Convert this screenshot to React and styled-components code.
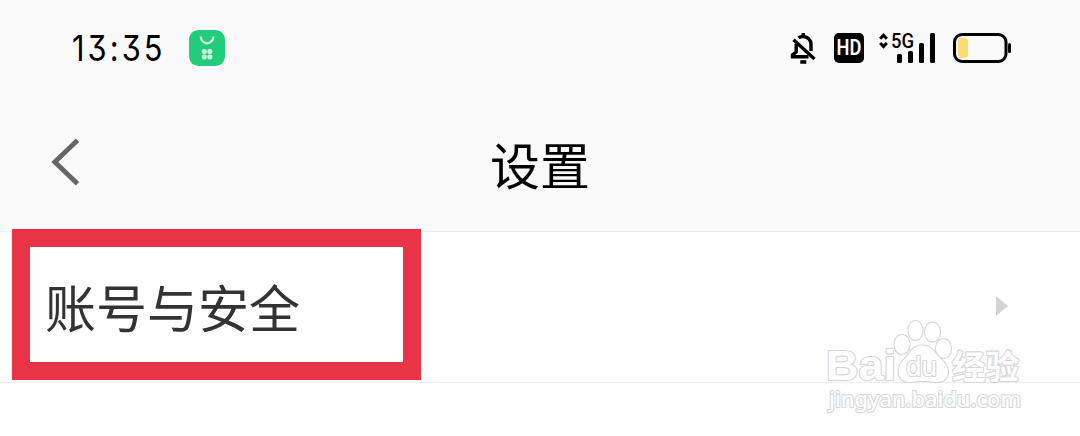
import styled, { createGlobalStyle } from 'styled-components';

const GlobalStyle = createGlobalStyle`
  body {
    margin: 0;
    background-color: #fff;
    font-family: "Noto Sans CJK SC", sans-serif;
  }
`;

const Screen = styled.div`
  position: relative;
  width: 1080px;
  height: 436px;
  overflow: hidden;
  background-color: #fefefe;
`;

const Header = styled.header`
  box-sizing: border-box;
  height: 232px;
  background-color: #f9f9f9;
  border-bottom: 1px solid #efefef;
`;

const StatusBar = styled.div`
  display: flex;
  justify-content: space-between;
  align-items: center;
  height: 96px;
  padding: 0 68px 0 72px;
`;

const StatusGroup = styled.div`
  display: flex;
  align-items: center;
`;

const TimeBox = styled.div`
  width: 117px;
`;

const Time = styled.span`
  display: inline-block;
  font-family: Inter, sans-serif;
  font-size: 36px;
  line-height: 44px;
  font-feature-settings: "cv09";
  letter-spacing: 3.6px;
  white-space: nowrap;
  color: #000;
  transform: scaleX(0.855);
  transform-origin: left center;
`;

const Icon = styled.svg`
  display: block;
  flex: none;
  overflow: visible;
  margin-left: ${(props) => props.$gap || 0}px;
`;

const HdBadge = styled.div`
  display: flex;
  justify-content: center;
  align-items: center;
  width: 30px;
  height: 30px;
  margin-left: 18px;
  border-radius: 5px;
  background-color: #000;
`;

const HdText = styled.span`
  color: #fff;
  font-family: Roboto, sans-serif;
  font-size: 22px;
  font-weight: 600;
  line-height: 30px;
  transform: scaleX(0.83);
`;

const TitleBar = styled.div`
  display: grid;
  grid-template-columns: 1fr auto 1fr;
  align-items: center;
  height: 132px;
  padding: 0 51px;
`;

const Title = styled.h1`
  margin: 2px 0 0;
  font-size: 50px;
  font-weight: 400;
  line-height: 74px;
  color: #000;
`;

const Row = styled.div`
  box-sizing: border-box;
  display: flex;
  justify-content: space-between;
  align-items: center;
  height: 151px;
  padding: 0 72px 2px 45px;
  border-bottom: 1px solid #efefef;
`;

const RowLabel = styled.span`
  font-size: 51px;
  font-weight: 400;
  line-height: 74px;
  color: #333;
`;

const Highlight = styled.div`
  position: absolute;
  box-sizing: border-box;
  left: 12px;
  top: 229px;
  width: 409px;
  height: 151px;
  border: 18px solid #e93448;
`;

const Watermark = styled.svg`
  position: absolute;
  left: 820px;
  top: 310px;
`;

const BellOff = () => (
  <Icon width="26" height="32" viewBox="0 0 26 32" fill="none" stroke="#000" strokeWidth="3.4">
    <path d="M8.5 5.9C9.8 4.9 11.4 4.5 13 4.5c4.6 0 8 3.3 8 7.8V19" />
    <path d="M6.2 12v8L2.5 22.8v1.9H18.5" />
    <path d="M3.5 7.800L24.500 27" />
    <path d="M13.3 1v4M10.3 30h6" />
  </Icon>
);

const AppBadge = () => (
  <Icon width="36" height="36" viewBox="0 0 36 36">
    <rect width="36" height="36" rx="9.5" fill="#23cc7b" />
    <path d="M11.8 6.500a6.3 6.8 0 0 0 12.6 0" fill="none" stroke="#c9f7df" strokeWidth="2.2" />
    <g fill="#c9f7df">
      <rect x="12.8" y="19" width="5" height="5" rx="2" />
      <rect x="18.4" y="19" width="5" height="5" rx="2" />
      <rect x="12.8" y="24.4" width="5" height="5" rx="2" />
      <rect x="18.4" y="24.4" width="5" height="5" rx="2" />
    </g>
  </Icon>
);

const Signal = () => (
  <Icon $gap={15} width="57" height="30" viewBox="0 0 57 30">
    <path d="M1.2 5.8l3.3-3.6 3.3 3.6M1.2 9.9l3.3 3.6 3.3-3.6" fill="none" stroke="#000" strokeWidth="3" />
    <text x="12" y="15" fontFamily="Roboto, sans-serif" fontSize="20" fontWeight="500" textLength="23" lengthAdjust="spacingAndGlyphs">5G</text>
    <rect x="18" y="21" width="5" height="9" rx="1.5" />
    <rect x="29" y="18" width="5" height="12" rx="1.5" />
    <rect x="40" y="10" width="5" height="20" rx="1.5" />
    <rect x="51" y="0" width="5" height="30" rx="1.5" />
  </Icon>
);

const Battery = () => (
  <Icon $gap={17} width="59" height="30" viewBox="0 0 59 30">
    <rect x="1.5" y="1.5" width="51.5" height="27" rx="7.5" fill="none" stroke="#000" strokeWidth="3" />
    <rect x="5" y="5" width="10" height="20" rx="4" fill="#fedc73" />
    <rect x="55" y="10" width="3" height="10" rx="1.5" />
  </Icon>
);

const App = () => {
  return (
    <Screen>
      <GlobalStyle />
      <Header>
        <StatusBar>
          <StatusGroup>
            <TimeBox>
              <Time>13:35</Time>
            </TimeBox>
            <AppBadge />
          </StatusGroup>
          <StatusGroup>
            <BellOff />
            <HdBadge>
              <HdText>HD</HdText>
            </HdBadge>
            <Signal />
            <Battery />
          </StatusGroup>
        </StatusBar>
        <TitleBar>
          <Icon width="30" height="48" viewBox="0 0 30 48">
            <path d="M26.5 2.2L3.8 24 26.5 45.8" fill="none" stroke="#666" strokeWidth="4.8" />
          </Icon>
          <Title>设置</Title>
        </TitleBar>
      </Header>
      <Row>
        <RowLabel>账号与安全</RowLabel>
        <Icon width="12" height="20" viewBox="0 0 12 20">
          <path d="M0 0l12 10L0 20z" fill="#d3d3d3" />
        </Icon>
      </Row>
      <Highlight />
      <Watermark
        width="230"
        height="126"
        viewBox="0 0 230 126"
        fill="#fff"
        stroke="#d6d6d6"
        strokeWidth="2.2"
        strokeLinejoin="round"
        paintOrder="stroke"
      >
        <text x="6" y="70" fontSize="43" fontWeight="700" fontFamily="'Liberation Sans', sans-serif" textLength="70" lengthAdjust="spacingAndGlyphs">Bai</text>
        <ellipse cx="82" cy="34.5" rx="7.5" ry="9.5" />
        <ellipse cx="95.5" cy="20.5" rx="7" ry="9.5" />
        <ellipse cx="112.500" cy="22" rx="7.5" ry="9.5" />
        <ellipse cx="123.5" cy="38.5" rx="7.500" ry="9.5" />
        <path d="M102 35.500c8 0 12 5 15.500 10 5 6 10.500 9 10.500 16 0 7-5 10.500-11 10.500-5 0-8-1-15-1s-8 1-13 1c-6 0-10.500-4-10.500-11 0-7 5-10 9-15.500 4-5 6.500-10 14.500-10z" />
        <text x="86" y="66" fontSize="27" fontFamily="'Liberation Sans', sans-serif" textLength="31" lengthAdjust="spacingAndGlyphs">du</text>
        <text x="132" y="69" fontSize="33.5" fontWeight="700" fontFamily="'Noto Sans CJK SC', sans-serif">经验</text>
        <text x="9" y="97" fontSize="22" fontWeight="500" fontFamily="'Noto Sans', sans-serif" textLength="192" lengthAdjust="spacingAndGlyphs">jingyan.baidu.com</text>
      </Watermark>
    </Screen>
  );
};

export default App;
